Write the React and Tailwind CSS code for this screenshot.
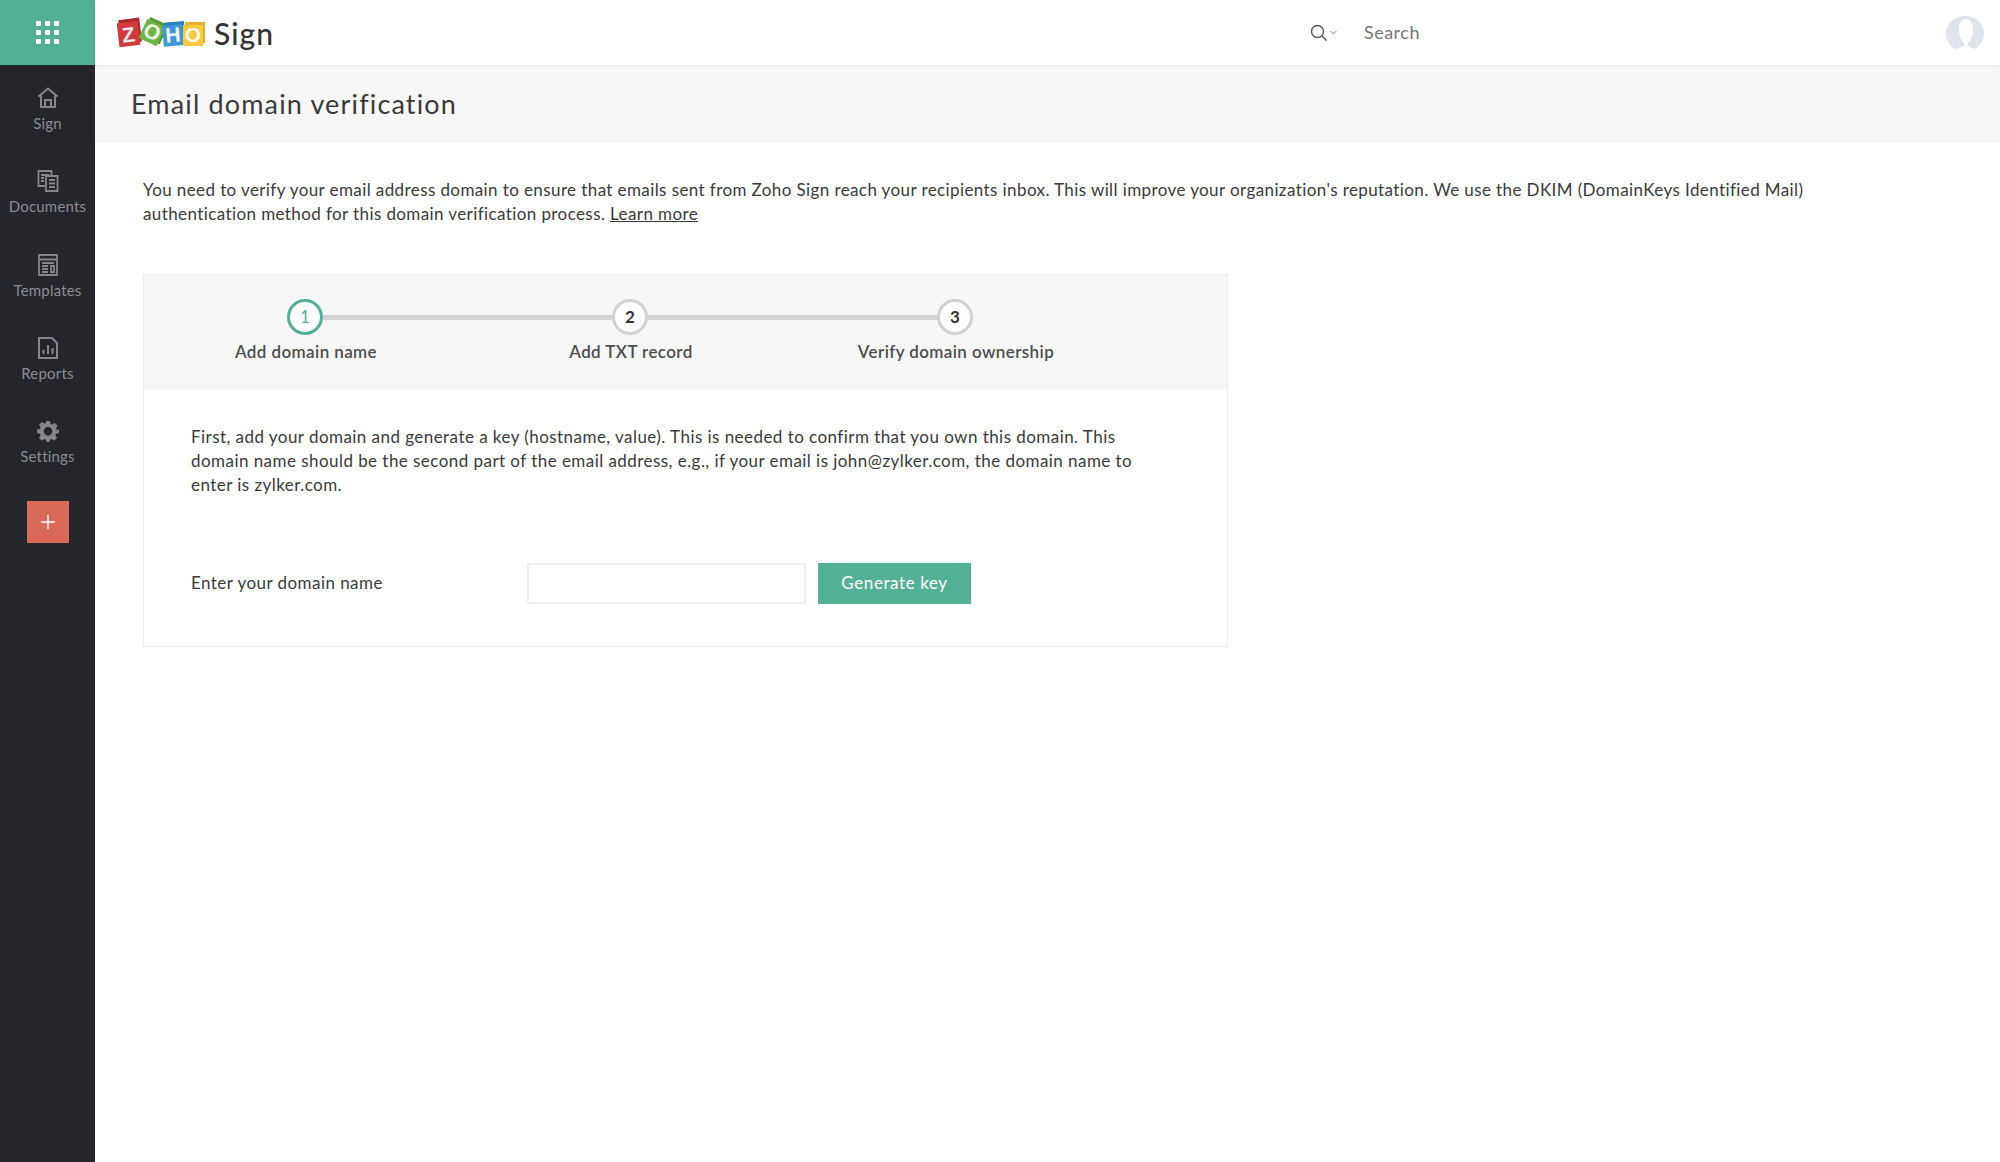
import { ChevronDown, Plus } from "lucide-react";

const font = { fontFamily: "Lato, sans-serif" };

const HomeIcon = () => (
  <svg width="22" height="22" viewBox="0 0 22 22" fill="none" stroke="#85868b" strokeWidth="2">
    <path d="M1.500 9.500 11 1.500l9.500 8" />
    <path d="M4 8v12h14V8" />
    <path d="M8 20v-7h6v7" />
  </svg>
);

const DocsIcon = () => (
  <svg width="22" height="22" viewBox="0 0 22 22" fill="none" stroke="#85868b" strokeWidth="1.8">
    <path d="M1.500 1h13v15h-13z" />
    <path d="M9 6h11.500v15H9z" fill="#24262c" />
    <path d="M4 5h8M4 8h3M4 11h3M12 10h6M12 13.500h6M12 17h6" />
  </svg>
);

const TemplatesIcon = () => (
  <svg width="20" height="22" viewBox="0 0 20 22" fill="none" stroke="#85868b" strokeWidth="1.8">
    <path d="M1 1h18v20H1z" />
    <path d="M1 5.500h18M4 9h12M4 12h6M4 15h6M4 18h6M13 12h3v6h-3z" />
  </svg>
);

const ReportsIcon = () => (
  <svg width="20" height="22" viewBox="0 0 20 22" fill="none" stroke="#85868b" strokeWidth="2">
    <path d="M1 1h13l5 5v15H1z" />
    <path d="M5.500 17v-4M10 17V8M14.500 17v-6" />
  </svg>
);

const GearIcon = () => (
  <svg width="22" height="22" viewBox="0 0 22 22">
    <path
      fill="#85868b"
      fillRule="evenodd"
      d="M9 1h4l.6 2.900 1.700.7 2.500-1.600 2.800 2.800-1.600 2.500.7 1.700L22 9.500v3.600l-2.900.6-.7 1.700 1.600 2.500-2.800 2.800-2.500-1.600-1.700.7L12.400 22H9.600L9 19.800l-1.700-.7-2.500 1.600-2.800-2.800 1.600-2.500-.7-1.700L0 13.100V9.500l2.900-.6.7-1.700L2 4.800 4.800 2l2.500 1.600L9 2.900zM11 7a4.300 4.300 0 1 0 0 8.600A4.300 4.300 0 0 0 11 7z"
    />
  </svg>
);

const navItems = [
  { label: "Sign", icon: <HomeIcon /> },
  { label: "Documents", icon: <DocsIcon /> },
  { label: "Templates", icon: <TemplatesIcon /> },
  { label: "Reports", icon: <ReportsIcon /> },
  { label: "Settings", icon: <GearIcon /> },
];

const steps = ["Add domain name", "Add TXT record", "Verify domain ownership"];

function Tile({ x, y, rotate, w, h, fill, side, letter, color }) {
  return (
    <g transform={`rotate(${rotate} ${x + w / 2} ${y + h / 2})`}>
      <rect x={x + 2} y={y - 3} width={w} height={h} fill={side} />
      <rect x={x} y={y} width={w} height={h} fill={fill} />
      <text
        x={x + w / 2}
        y={y + h - 4}
        textAnchor="middle"
        fontSize="21"
        fontWeight="700"
        fill={color}
        style={{ fontFamily: "'Liberation Sans', sans-serif" }}
      >
        {letter}
      </text>
    </g>
  );
}

const ZohoLogo = () => (
  <svg width="88" height="34" viewBox="0 0 88 34">
    <Tile x={1} y={6} rotate={-7} w={21} h={24} fill="#cf3a3c" side="#a82a2d" letter="Z" color="#f6e9e9" />
    <Tile x={25} y={6} rotate={25} w={20} h={21} fill="#6fb544" side="#4f9a33" letter="O" color="#f2f8ee" />
    <Tile x={46} y={9} rotate={-5} w={20} h={21} fill="#3f97d8" side="#2f7cba" letter="H" color="#eef6fc" />
    <Tile x={66} y={9} rotate={0} w={20} h={21} fill="#f6cb3f" side="#e0b02e" letter="O" color="#fff9e6" />
  </svg>
);

export default function App() {
  return (
    <div className="flex min-h-[1162px] bg-white text-[#333]" style={font}>
      <aside className="flex w-[95px] shrink-0 flex-col items-center bg-[#24262c]">
        <div className="flex h-[65px] w-full items-center justify-center bg-[#52b094]">
          <div className="grid grid-cols-3 gap-[4px]">
            {Array.from({ length: 9 }).map((_, i) => (
              <span key={i} className="h-[5px] w-[5px] rounded-[1px] bg-white" />
            ))}
          </div>
        </div>
        <nav className="flex w-full flex-col items-center pt-[22px]">
          {navItems.map((item) => (
            <div key={item.label} className="flex h-[83.3px] w-full flex-col items-center">
              <div className="flex h-[22px] items-center justify-center">{item.icon}</div>
              <span className="mt-[5px] text-[15px] leading-[18px] tracking-[0.2px] text-[#8b8c91]">{item.label}</span>
            </div>
          ))}
        </nav>
        <button className="mt-[-2px] flex h-[42px] w-[42px] items-center justify-center bg-[#d96a5a]">
          <Plus size={22} strokeWidth={1.6} color="#fff" />
        </button>
      </aside>

      <main className="flex min-w-0 flex-1 flex-col">
        <header className="relative z-10 flex h-[65px] items-center pl-[22px] pr-[16px] shadow-[0_1px_4px_rgba(0,0,0,0.08)]">
          <ZohoLogo />
          <span className="ml-[9px] text-[30px] font-medium leading-none tracking-[1px] text-[#333]">Sign</span>
          <div className="ml-[1036px] flex items-center">
            <svg width="18" height="18" viewBox="0 0 18 18" fill="none" stroke="#555" strokeWidth="1.400">
              <circle cx="7.500" cy="7.500" r="6" />
              <path d="m12 12 4.500 4.500" />
            </svg>
            <ChevronDown size={11} strokeWidth={1.600} color="#555" />
          </div>
          <span className="ml-[25px] text-[18px] tracking-[0.5px] text-[#777]">Search</span>
          <svg className="ml-auto" width="38" height="34" viewBox="0 0 38 34" fill="#dfe3ec">
            <path d="M9 33C4 30 0 24 0 18 0 8 8 0 19 0s19 8 19 18c0 6-4 12-9 15l-7-3v-3c3-2 5-8 5-14 0-6-3-10-7-10s-7 4-7 10c0 6 2 12 5 14v3z" />
          </svg>
        </header>

        <div className="flex h-[78px] items-center bg-[#f7f7f7] pl-[36px]">
          <h1 className="text-[27px] font-normal tracking-[1.15px] text-[#3a3a3a]">Email domain verification</h1>
        </div>

        <section className="pl-[48px] pr-[170px] pt-[35px]">
          <p className="text-[17px] leading-[24px] tracking-[0.4px] text-[#3a3a3a]">
            You need to verify your email address domain to ensure that emails sent from Zoho Sign reach your recipients inbox. This will improve your organization's reputation. We use the DKIM (DomainKeys Identified Mail) authentication method for this domain verification process.{" "}
            <a className="underline">Learn more</a>
          </p>

          <div className="mt-[48px] w-[1085px] border border-[#eeeeee]">
            <div className="h-[115px] bg-[#f7f7f7] pt-[24px]">
              <div className="ml-[143px] flex w-[686px] items-center">
                <span className="flex h-[36px] w-[36px] shrink-0 items-center justify-center rounded-full border-[3.5px] border-[#52b094] bg-white text-[17px] text-[#52b094]">1</span>
                <span className="h-[5px] flex-1 bg-[#d2d2d2]" />
                <span className="flex h-[36px] w-[36px] shrink-0 items-center justify-center rounded-full border-[3.5px] border-[#d2d2d2] bg-white text-[17px] font-bold text-[#333]">2</span>
                <span className="h-[5px] flex-1 bg-[#d2d2d2]" />
                <span className="flex h-[36px] w-[36px] shrink-0 items-center justify-center rounded-full border-[3.5px] border-[#d2d2d2] bg-white text-[17px] font-bold text-[#333]">3</span>
              </div>
              <div className="mt-[5px] flex gap-[25px] pl-[12px]">
                {steps.map((step) => (
                  <span key={step} className="w-[300px] text-center text-[17px] font-semibold leading-[24px] tracking-[0.4px] text-[#4d4d4d]">{step}</span>
                ))}
              </div>
            </div>

            <div className="h-[256px] pl-[47px] pr-[80px] pt-[35px]">
              <p className="text-[17px] leading-[24px] tracking-[0.45px] text-[#3a3a3a]">
                First, add your domain and generate a key (hostname, value). This is needed to confirm that you own this domain. This domain name should be the second part of the email address, e.g., if your email is john@zylker.com, the domain name to enter is zylker.com.
              </p>
              <div className="mt-[66px] flex items-center">
                <label className="mb-[2px] w-[336px] text-[17px] tracking-[0.45px] text-[#3a3a3a]">Enter your domain name</label>
                <input className="h-[41px] w-[279px] border-2 border-[#f0f0f0] bg-white outline-none" />
                <button className="ml-[12px] h-[41px] w-[153px] bg-[#52b094] pb-[2px] text-[17px] tracking-[0.6px] text-white">Generate key</button>
              </div>
            </div>
          </div>
        </section>
      </main>
    </div>
  );
}
